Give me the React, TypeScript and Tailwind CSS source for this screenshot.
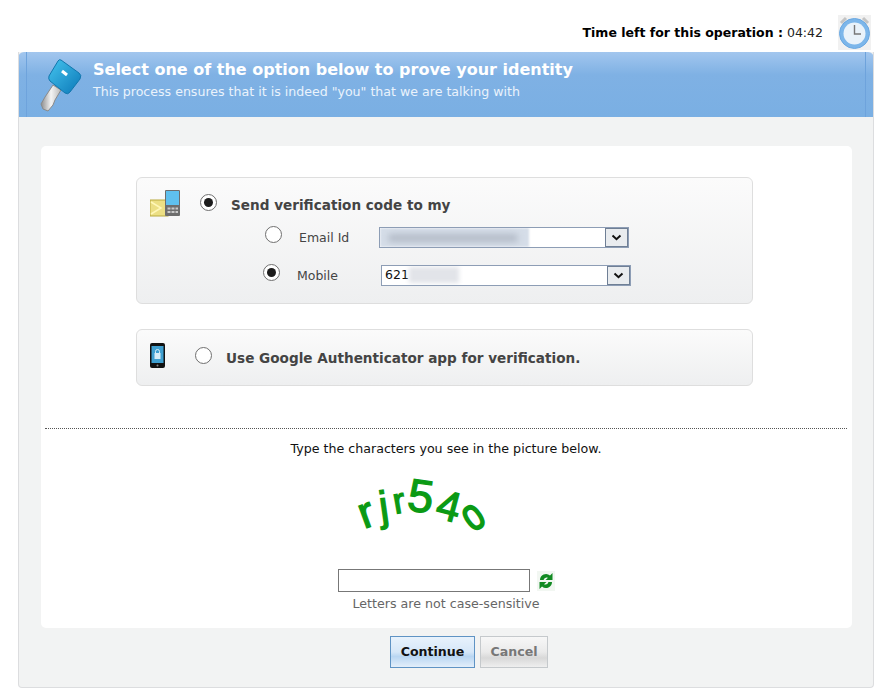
import React from 'react';

const Radio = ({ checked, className = '' }: { checked?: boolean; className?: string }) => (
  <span className={`flex h-[17px] w-[17px] shrink-0 items-center justify-center rounded-full border border-[#6f6f6f] bg-white ${className}`}>
    {checked && <span className="h-[9px] w-[9px] rounded-full bg-[#1c1c1c]" />}
  </span>
);

const FakeSelect = ({ className = '', children }: { className?: string; children: React.ReactNode }) => (
  <div className={`mt-[1px] flex h-[21px] w-[250px] shrink-0 overflow-hidden border border-[#8d9db5] bg-white ${className}`}>
    <div className="relative flex-1 overflow-hidden">{children}</div>
    <div className="flex w-[23px] items-center justify-center border border-[#6f7f95] bg-[#e9ecef]">
      <svg width="11" height="7" viewBox="0 0 11 7"><path d="M1.5 1.5 5.5 5.2 9.5 1.5" fill="none" stroke="#111" strokeWidth="2" /></svg>
    </div>
  </div>
);

const KeyIcon = () => (
  <svg width="44" height="54" viewBox="0 0 44 54" className="shrink-0">
    <defs>
      <linearGradient id="keyHead" x1="0" y1="0" x2="1" y2="1">
        <stop offset="0" stopColor="#45c4ee" />
        <stop offset="1" stopColor="#0b78b8" />
      </linearGradient>
      <linearGradient id="keyBlade" x1="0" y1="0" x2="1" y2="0">
        <stop offset="0" stopColor="#8d8d8d" />
        <stop offset=".5" stopColor="#f4f4f4" />
        <stop offset="1" stopColor="#b9b9b9" />
      </linearGradient>
    </defs>
    <path d="M13 26 21 31 15 41 13 46 8 52 3 50 1 45 5 38Z" fill="url(#keyBlade)" stroke="#8a8a8a" />
    <path d="M21 1 39 14Q42 16 40 20L30 33Q28 36 25 34L10 22Q8 20 9 17L18 2Q19 0 21 1Z" fill="url(#keyHead)" stroke="#1277ad" />
    <path d="M22 12 27 16" stroke="#fff" strokeWidth="3" />
  </svg>
);

const ClockIcon = () => (
  <svg width="33" height="35" viewBox="0 0 33 35">
    <rect width="33" height="35" fill="#f1f1f1" />
    <path d="M3 8 8 3M30 8 25 3" stroke="#c4c4c4" strokeWidth="3" />
    <circle cx="16.500" cy="18.500" r="15" fill="#7cb6ea" stroke="#6aa8e2" />
    <circle cx="16.500" cy="18.500" r="11" fill="#e9f2fa" />
    <path d="M16.500 10V19H23" fill="none" stroke="#777" strokeWidth="1.400" />
  </svg>
);

const MailPhoneIcon = () => (
  <svg width="30" height="27" viewBox="0 0 30 27" className="shrink-0">
    <rect x="0" y="10" width="18" height="16" fill="#ecdf84" stroke="#b9aa3e" />
    <path d="M1 12 11 18 1 24" fill="none" stroke="#fff7b8" strokeWidth="1.500" />
    <rect x="15" y="0" width="15" height="26" rx="1" fill="#6d6d6d" />
    <rect x="16" y="1" width="13" height="14" fill="#5fc0ee" />
    <path d="M17.500 17.500h3v2h-3zM21.500 17.500h3v2h-3zM25.500 17.500h2.500v2h-2.500zM17.500 21h3v2h-3zM21.500 21h3v2h-3zM25.500 21h2.500v2h-2.500z" fill="#c9c9c9" />
  </svg>
);

const LockPhoneIcon = () => (
  <svg width="15" height="25" viewBox="0 0 15 25" className="shrink-0">
    <rect width="15" height="25" rx="2" fill="#111" />
    <rect x="1.500" y="3" width="12" height="17" fill="#3f9fd0" />
    <rect x="4.500" y="10" width="6" height="6" fill="#d7edf7" />
    <path d="M5.500 10V8.500a2 2 0 0 1 4 0V10" fill="none" stroke="#d7edf7" />
    <circle cx="7.500" cy="22.500" r="1" fill="#888" />
  </svg>
);

const CaptchaImage = () => (
  <svg width="150" height="66" viewBox="0 0 150 66" className="overflow-visible font-['Liberation_Sans',sans-serif]" fill="#0b9a14" stroke="#0b9a14" strokeWidth="1.3">
    <text transform="translate(24 54) rotate(-20)" fontSize="44">r</text>
    <text transform="translate(41 46) rotate(-8)" fontSize="42">j</text>
    <text transform="translate(55 39) rotate(-10)" fontSize="36">r</text>
    <text transform="translate(66 35) rotate(8)" fontSize="46">5</text>
    <text transform="translate(94 42) rotate(15)" fontSize="42">4</text>
    <text transform="translate(133 58) rotate(-35) scale(1.05 1.45)" fontSize="32">o</text>
  </svg>
);

const RefreshIcon = () => (
  <svg width="18" height="20" viewBox="0 0 18 20" className="shrink-0">
    <rect width="18" height="20" fill="#f2f7f2" />
    <path d="M3 9A6 6 0 0 1 13 4.500L15.500 2V9H8.500L11 6.800A3.500 3.500 0 0 0 6.500 9Z" fill="#118a22" />
    <path d="M15 11A6 6 0 0 1 5 15.500L2.500 18V11H9.500L7 13.200A3.500 3.500 0 0 0 11.500 11Z" fill="#118a22" />
  </svg>
);

export default function App() {
  return (
    <div className="h-[698px] w-[888px] bg-white font-['DejaVu_Sans',Verdana,sans-serif] text-[13px] text-black">
      <div className="flex h-[52px] items-start justify-end pr-[17px] pt-[15px]">
        <div className="mt-[9px] flex items-center whitespace-nowrap text-[12.5px] leading-[17px]">
          <span className="font-bold">Time left for this operation :</span>
          <span className="ml-[4px] text-[#222]">04:42</span>
        </div>
        <div className="ml-[15px]"><ClockIcon /></div>
      </div>

      <div className="ml-[18px] flex h-[636px] w-[856px] flex-col overflow-hidden rounded-b-[4px] border-x border-b border-[#dcdddf] bg-[#f2f3f3]">
        <div className="-mx-px h-[65px] shrink-0 rounded-t-[6px] bg-[linear-gradient(#a2c6ee,#7fb1e4_35%,#7aafe3)] px-[8px] text-white">
          <div className="flex h-full border-x border-[#6ea3dc] pl-[13px]">
            <div className="mt-[7px]"><KeyIcon /></div>
            <div className="ml-[9px] mt-[8px] whitespace-nowrap">
              <div className="text-[16px] font-bold leading-[20px]">Select one of the option below to prove your identity</div>
              <div className="mt-[3px] text-[12.6px] leading-[17px] text-[#eaf3fc]">This process ensures that it is indeed "you" that we are talking with</div>
            </div>
          </div>
        </div>

        <div className="ml-[22px] mr-[21px] mt-[29px] flex h-[482px] shrink-0 flex-col rounded-[5px] bg-white pl-[4px] pr-[5px]">
          <div className="ml-[91px] mt-[31px] h-[127px] w-[617px] shrink-0 rounded-[6px] border border-[#dedede] bg-[linear-gradient(#fbfbfb,#eeeff0)] pl-[13px] pt-[12px]">
            <div className="flex items-start">
              <MailPhoneIcon />
              <Radio checked className="ml-[20px] mt-[4px]" />
              <span className="ml-[14px] mt-[5px] text-[13.6px] font-bold leading-[20px] text-[#444]">Send verification code to my</span>
            </div>
            <div className="mt-[9px] flex items-start">
              <Radio className="ml-[115px]" />
              <span className="ml-[17px] mt-[3px] w-[80px] text-[12.5px] leading-[17px] text-[#444]">Email Id</span>
              <FakeSelect>
                <div className="absolute left-0 top-0 h-[19px] w-[149px] bg-[#d5dde8] blur-[1px]" />
                <div className="absolute left-[8px] top-[6px] h-[8px] w-[130px] rounded-full bg-[#b4bcc8] blur-[3px]" />
              </FakeSelect>
            </div>
            <div className="mt-[16px] flex items-start">
              <Radio checked className="ml-[113px]" />
              <span className="ml-[17px] mt-[3px] w-[84px] text-[12.5px] leading-[17px] text-[#444]">Mobile</span>
              <FakeSelect className="h-[20px]">
                <span className="absolute left-[3px] top-0 text-[12.5px] leading-[18px] text-[#111]">621</span>
                <div className="absolute left-[27px] top-[1px] h-[16px] w-[50px] bg-[#e2e4e9] blur-[2px]" />
              </FakeSelect>
            </div>
          </div>

          <div className="ml-[91px] mt-[25px] flex h-[57px] w-[617px] shrink-0 items-center rounded-[6px] border border-[#dedede] bg-[linear-gradient(#fbfbfb,#eeeff0)] pl-[13px]">
            <div className="-mt-[4px]"><LockPhoneIcon /></div>
            <Radio className="-mt-[4px] ml-[30px]" />
            <span className="ml-[14px] mt-[2px] text-[13.6px] font-bold text-[#444]">Use Google Authenticator app for verification.</span>
          </div>

          <div className="mt-[42px] border-t border-dotted border-[#555]" />
          <div className="mt-[11px] text-center text-[12.65px] leading-[17px] text-[#111]">Type the characters you see in the picture below.</div>

          <div className="mt-[18px] flex justify-center pr-[62px]"><CaptchaImage /></div>

          <div className="mt-[28px] flex items-center justify-center">
            <div className="h-[23px] w-[192px] border border-[#777] bg-white" />
            <div className="ml-[7px]"><RefreshIcon /></div>
          </div>
          <div className="mt-[3px] text-center text-[12.65px] leading-[17px] text-[#666]">Letters are not case-sensitive</div>
        </div>

        <div className="mt-[8px] flex justify-center gap-[5px] pl-[46px]">
          <button className="h-[32px] w-[85px] border border-[#5f93c4] bg-[linear-gradient(#e8f2fc,#d6e7f8_50%,#b9d6f2_65%,#e3eefa)] text-[12.6px] font-bold text-[#111]">Continue</button>
          <button className="h-[32px] w-[68px] border border-[#c5c9cc] bg-[linear-gradient(#f7f7f7,#eaeaea_50%,#d8d8d8_70%,#efefef)] text-[12.6px] font-bold text-[#777]">Cancel</button>
        </div>
      </div>
    </div>
  );
}
